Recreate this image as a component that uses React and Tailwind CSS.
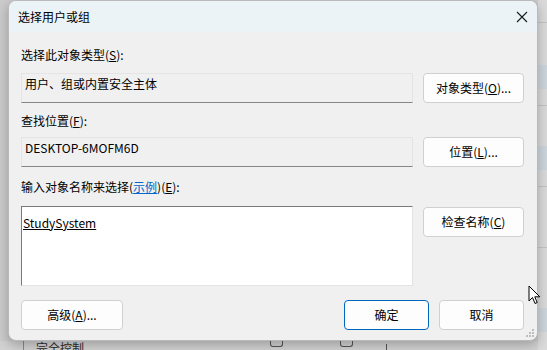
import React from "react";

const font = { fontFamily: '"Noto Sans CJK SC", "Microsoft YaHei", "Noto Sans", sans-serif' };

function Btn({ children, className = "", primary = false }) {
  return (
    <div
      className={
        "flex h-[30px] items-center justify-center rounded-[4px] bg-[#fdfdfd] text-[12px] text-black " +
        (primary ? "border border-[#0067c0] " : "border border-[#d0d0d0] ") +
        className
      }
    >
      {children}
    </div>
  );
}

export default function App() {
  return (
    <div className="relative h-[350px] w-[547px] overflow-hidden bg-[#cbcbcb]" style={font}>
      {/* background window pieces */}
      <div className="absolute left-[538px] top-0 h-[350px] w-[9px] bg-[#dadada]">
        <div className="mt-[22px] h-[1px] bg-[#c4c4c4]" />
        <div className="mt-[42px] h-[24px] bg-[#cdd5dc]" />
        <div className="mt-[16px] h-[1px] bg-[#c4c4c4]" />
        <div className="mt-[40px] h-[24px] bg-[#cdd5dc]" />
        <div className="mt-[16px] h-[1px] bg-[#c4c4c4]" />
        <div className="mt-[60px] h-[1px] bg-[#c4c4c4]" />
        <div className="mt-[60px] h-[24px] bg-[#cdd5dc]" />
      </div>
      <div className="absolute left-0 top-[341px] flex h-[9px] w-[538px] bg-[#d2d2d2]">
        <div className="ml-[23px] h-full w-[1px] bg-[#8a8a8a]" />
        <div className="ml-[12px] mt-[1px] text-[12px] leading-[12px] text-[#2a2a2a]">完全控制</div>
        <div className="ml-[186px] h-[6px] w-[13px] rounded-b-[3px] border-x border-b border-[#555]" />
        <div className="ml-[57px] h-[6px] w-[13px] rounded-b-[3px] border-x border-b border-[#555]" />
        <div className="ml-[33px] mt-[3px] h-[6px] w-[1px] bg-[#555]" />
      </div>

      {/* dialog */}
      <div className="absolute left-[8px] top-0 flex h-[341px] w-[530px] flex-col overflow-hidden rounded-[8px] border border-[#b9b9b9] bg-[#f0f0f0] shadow-[0_4px_12px_rgba(0,0,0,0.25)]">
        <div className="flex h-[31px] shrink-0 items-center justify-between bg-[#ebf3f6] pl-[9px] pr-[8px]">
          <span className="text-[12px] text-black">选择用户或组</span>
          <svg width="12" height="12" viewBox="0 0 12 12" className="mr-[1px]">
            <path d="M1 1 L11 11 M11 1 L1 11" stroke="#1a1a1a" strokeWidth="1.1" fill="none" />
          </svg>
        </div>

        <div className="flex flex-col px-[12px]">
          <div className="mt-[15px] h-[16px] text-[12px] leading-[16px] text-black">
            选择此对象类型(<span className="underline">S</span>):
          </div>
          <div className="mt-[10px] flex gap-[10px]">
            <div className="h-[30px] w-[392px] border border-[#e4e4e4] border-b-[#868686] bg-[#f0f0f0] pl-[3px] pt-[2px] text-[12px] leading-[16px] text-black">
              用户、组或内置安全主体
            </div>
            <Btn className="w-[101px]">
              对象类型(<span className="underline">O</span>)...
            </Btn>
          </div>

          <div className="mt-[10px] h-[16px] text-[12px] leading-[16px] text-black">
            查找位置(<span className="underline">F</span>):
          </div>
          <div className="mt-[8px] flex gap-[10px]">
            <div className="h-[30px] w-[392px] border border-[#e4e4e4] border-b-[#868686] bg-[#f0f0f0] pl-[3px] pt-[2px] text-[12px] leading-[16px] text-black">
              DESKTOP-6MOFM6D
            </div>
            <Btn className="w-[101px]">
              位置(<span className="underline">L</span>)...
            </Btn>
          </div>

          <div className="mt-[12px] h-[16px] text-[12px] leading-[16px] text-black">
            输入对象名称来选择(<span className="text-[#0066cc] underline">示例</span>)(<span className="underline">E</span>):
          </div>
          <div className="mt-[11px] flex items-start gap-[10px]">
            <div className="h-[80px] w-[392px] border border-[#7a7a7a] border-b-[#e3e3e3] border-r-[#e3e3e3] bg-white pl-[1px] pt-[9px] text-[12px] leading-[14px] text-black">
              <span className="underline">StudySystem</span>
            </div>
            <Btn className="mt-[1px] w-[101px]">
              检查名称(<span className="underline">C</span>)
            </Btn>
          </div>

          <div className="mt-[14px] flex">
            <Btn className="w-[102px]">
              高级(<span className="underline">A</span>)...
            </Btn>
            <Btn primary className="ml-[221px] w-[85px]">确定</Btn>
            <Btn className="ml-[10px] w-[85px]">取消</Btn>
          </div>
        </div>

        {/* resize grip */}
        <svg className="absolute bottom-[3px] right-[3px]" width="8" height="8" viewBox="0 0 8 8">
          <rect x="6" y="0" width="2" height="2" fill="#bdbdbd" />
          <rect x="3" y="3" width="2" height="2" fill="#bdbdbd" />
          <rect x="6" y="3" width="2" height="2" fill="#bdbdbd" />
          <rect x="0" y="6" width="2" height="2" fill="#bdbdbd" />
          <rect x="3" y="6" width="2" height="2" fill="#bdbdbd" />
          <rect x="6" y="6" width="2" height="2" fill="#bdbdbd" />
        </svg>
      </div>

      {/* mouse cursor */}
      <svg className="absolute left-[528px] top-[285px]" width="14" height="20" viewBox="0 0 14 20">
        <path d="M1 1 L1 16 L4.5 12.5 L7 18.5 L9.2 17.6 L6.8 11.8 L11.8 11.8 Z" fill="#fff" stroke="#000" strokeWidth="1" strokeLinejoin="round" />
      </svg>
    </div>
  );
}
